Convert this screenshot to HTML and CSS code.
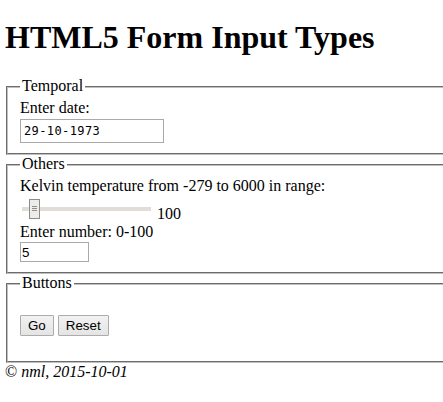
FILE: index.html
```html
<!DOCTYPE html>
<html lang="en">
<head>
<meta charset="utf-8">
<title>HTML5 Form Input Types</title>
<link rel="stylesheet" href="styles.css">
</head>
<body>
<h1 class="title">HTML5 Form Input Types</h1>
<form class="form">
  <fieldset class="group">
    <legend class="group-legend">Temporal</legend>
    <label class="field-label" for="date">Enter date:</label>
    <input class="date-input" id="date" type="text" value="29-10-1973">
  </fieldset>
  <fieldset class="group">
    <legend class="group-legend">Others</legend>
    <label class="field-label" for="kelvin">Kelvin temperature from -279 to 6000 in range:</label>
    <div class="range-row">
      <input class="range" id="kelvin" type="range" min="-279" max="6000" value="100">
      <output class="range-value" for="kelvin">100</output>
    </div>
    <label class="field-label" for="num">Enter number: 0-100</label>
    <input class="number-input" id="num" type="number" min="0" max="100" value="5">
  </fieldset>
  <fieldset class="group">
    <legend class="group-legend">Buttons</legend>
    <div class="button-row">
      <button class="btn" type="submit">Go</button>
      <button class="btn" type="reset">Reset</button>
    </div>
  </fieldset>
</form>
<footer class="footer">&copy; <em class="footer-note">nml, 2015-10-01</em></footer>
</body>
</html>
```

FILE: styles.css
```css
html {
  overflow: hidden;
}

body {
  margin: 0;
  padding: 0 0 0 5px;
  font-family: "Liberation Serif", "Times New Roman", serif;
  font-size: 16px;
  line-height: 18px;
  color: #000;
  background: #fff;
}

.title {
  margin: 19px 0 21px;
  font-size: 32px;
  line-height: 37px;
  font-weight: bold;
}

.form {
  margin: 0;
}

/* the fieldsets run on past the right edge of the window in the reference */
.group {
  margin: 0 0 0 1px;
  padding: 2px 12px 10px;
  border: 2px groove #c0c0c0;
  border-right: 0;
  min-width: 0;
}

.group-legend {
  padding: 0 2px 2px;
  line-height: 18px;
}

.field-label {
  display: block;
}

.date-input {
  display: block;
  box-sizing: border-box;
  margin: 2px 0 0;
  width: 144px;
  height: 24px;
  padding: 0 3px;
  border: 1px solid #a9a9a9;
  border-radius: 0;
  font-family: "DejaVu Sans Mono", "Liberation Mono", monospace;
  font-size: 12px;
  letter-spacing: 0.4px;
  color: #000;
  background: #fff;
  outline: none;
}

.range-row {
  display: flex;
  align-items: flex-start;
  height: 28px;
}

.range {
  -webkit-appearance: none;
  appearance: none;
  box-sizing: border-box;
  width: 129px;
  height: 20px;
  margin: 4px 6px 0 2px;
  padding: 0;
  background: transparent;
}

.range::-webkit-slider-runnable-track {
  height: 4px;
  background: #e1ded9;
  border: none;
}

.range::-webkit-slider-thumb {
  -webkit-appearance: none;
  appearance: none;
  box-sizing: border-box;
  width: 11px;
  height: 20px;
  margin-top: -8px;
  border: 1px solid #8c8c8c;
  background:
    linear-gradient(#8e8e8e, #8e8e8e) center 6px / 5px 1px no-repeat,
    linear-gradient(#8e8e8e, #8e8e8e) center 8px / 5px 1px no-repeat,
    linear-gradient(#8e8e8e, #8e8e8e) center 10px / 5px 1px no-repeat,
    #eeece9;
}

.range-value {
  margin-top: 10px;
  line-height: 18px;
}

.number-input {
  display: block;
  box-sizing: border-box;
  margin: 1px 0 0;
  width: 69px;
  height: 20px;
  padding: 0 1px;
  border: 1px solid #a9a9a9;
  border-radius: 0;
  font-family: "Liberation Sans", Arial, sans-serif;
  font-size: 13.33px;
  color: #000;
  background: #fff;
  outline: none;
  -moz-appearance: textfield;
  appearance: textfield;
}

.number-input::-webkit-inner-spin-button,
.number-input::-webkit-outer-spin-button {
  -webkit-appearance: none;
  margin: 0;
}

.button-row {
  display: flex;
  gap: 4px;
  margin: 19px 0 15px;
}

.btn {
  box-sizing: border-box;
  height: 21px;
  padding: 0 7px;
  border: 1px solid #acacac;
  border-radius: 1px;
  background: linear-gradient(#f2f2f2, #e4e4e4);
  font-family: "Liberation Sans", Arial, sans-serif;
  font-size: 13.33px;
  line-height: 19px;
  color: #000;
}

.footer {
  line-height: 18px;
}

.footer-note {
  font-style: italic;
}
```
